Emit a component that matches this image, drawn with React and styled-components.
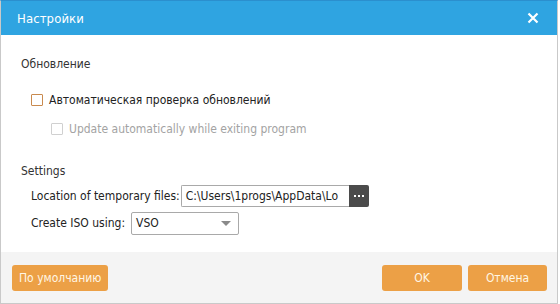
import React, { useState } from 'react'
import styled, { createGlobalStyle } from 'styled-components'

const FONT = `"DejaVu Sans Condensed", "DejaVu Sans", "Liberation Sans", sans-serif`

const GlobalStyle = createGlobalStyle`
	html, body {
		margin: 0;
		padding: 0;
		background: #ffffff;
	}
	body {
		font-family: ${FONT};
	}
`

const Window = styled.div`
	width: 558px;
	height: 304px;
	box-sizing: border-box;
	display: flex;
	flex-direction: column;
	border: 1px solid #c9c9c9;
	border-top-color: #2b8fce;
	background: #ffffff;
	overflow: hidden;
`

const Header = styled.header`
	height: 34px;
	flex: none;
	display: flex;
	align-items: center;
	justify-content: space-between;
	padding: 0 18px 0 16px;
	background: #2fa4e1;
	color: #ffffff;
`

const Title = styled.h1`
	margin: 0;
	font-size: 13px;
	font-weight: normal;
	letter-spacing: 0.1px;
`

const CloseButton = styled.button`
	width: 13px;
	height: 13px;
	padding: 0;
	border: 0;
	background: none;
	display: flex;
	align-items: center;
	justify-content: center;
	cursor: pointer;
`

const Body = styled.main`
	flex: 1;
	display: flex;
	flex-direction: column;
	padding-left: 20px;
	color: #333333;
	font-size: 12px;
`

const SectionTitle = styled.div`
	line-height: 16px;
	margin-top: ${p => p.$top}px;
`

const CheckRow = styled.label`
	display: flex;
	align-items: center;
	gap: 6px;
	line-height: 16px;
	margin-top: ${p => p.$top}px;
	margin-left: ${p => p.$indent}px;
	color: ${p => (p.$disabled ? '#a3a3a3' : '#222222')};
	cursor: ${p => (p.$disabled ? 'default' : 'pointer')};
`

const Box = styled.span`
	width: 10px;
	height: 10px;
	flex: none;
	border: 1px solid ${p => (p.$disabled ? '#d0d0d0' : '#c98a4e')};
	border-radius: 1px;
	background: #ffffff;
	display: flex;
	align-items: center;
	justify-content: center;
	font-size: 9px;
	color: #c98a4e;
`

const FieldRow = styled.div`
	display: flex;
	align-items: center;
	margin-top: ${p => p.$top}px;
	margin-left: 10px;
	height: 22px;
`

const FieldLabel = styled.span`
	color: #222222;
	margin-right: ${p => p.$gap}px;
	white-space: nowrap;
`

const PathBox = styled.div`
	display: flex;
	height: 22px;
	box-sizing: border-box;
	border: 1px solid #a9a9a9;
	border-right: 0;
	border-radius: 2px 0 0 2px;
`

const PathText = styled.div`
	width: 163px;
	padding-left: 4px;
	line-height: 20px;
	white-space: nowrap;
	color: #222222;
	background: #ffffff;
`

const BrowseButton = styled.button`
	width: 20px;
	border: 0;
	padding: 0;
	height: 22px;
	background: #4b4b4b;
	border-radius: 0 2px 2px 0;
	display: flex;
	align-items: center;
	justify-content: center;
	cursor: pointer;
`

const Select = styled.div`
	width: 108px;
	height: 23px;
	box-sizing: border-box;
	border: 1px solid #a9a9a9;
	border-radius: 2px;
	display: flex;
	align-items: center;
	justify-content: space-between;
	padding: 0 7px 0 4px;
	color: #222222;
	background: #ffffff;
`

const Footer = styled.footer`
	height: 51px;
	flex: none;
	box-sizing: border-box;
	display: flex;
	align-items: flex-start;
	padding: 13px 10px 0 11px;
	background: #f4f4f4;
`

const Spacer = styled.div`
	flex: 1;
`

const ActionButton = styled.button`
	height: 26px;
	min-width: ${p => p.$width}px;
	margin-left: ${p => p.$gap || 0}px;
	padding: 0 7px;
	border: 0;
	border-radius: 3px;
	background: #eca046;
	color: #fff6e4;
	font-family: ${FONT};
	font-size: 12px;
	cursor: pointer;
`

const CloseIcon = () => (
	<svg width="12" height="12" viewBox="0 0 12 12">
		<path d="M1.5 1.5 L10.5 10.5 M10.5 1.5 L1.5 10.5" stroke="#ffffff" strokeWidth="2.2" />
	</svg>
)

const Dots = () => (
	<svg width="12" height="4" viewBox="0 0 12 4">
		<rect x="1" y="1" width="2" height="2" fill="#ffffff" />
		<rect x="5" y="1" width="2" height="2" fill="#ffffff" />
		<rect x="9" y="1" width="2" height="2" fill="#ffffff" />
	</svg>
)

const Caret = () => (
	<svg width="10" height="5" viewBox="0 0 10 5">
		<path d="M0 0 H10 L5 5 Z" fill="#8a8a8a" />
	</svg>
)

const App = () => {
	const [ autoCheck, setAutoCheck ] = useState(false)

	return (
		<>
			<GlobalStyle />
			<Window>
				<Header>
					<Title>Настройки</Title>
					<CloseButton aria-label="Закрыть">
						<CloseIcon />
					</CloseButton>
				</Header>
				<Body>
					<SectionTitle $top={21}>Обновление</SectionTitle>
					<CheckRow $top={20} $indent={10} onClick={() => setAutoCheck(!autoCheck)}>
						<Box>{autoCheck && '✓'}</Box>
						Автоматическая проверка обновлений
					</CheckRow>
					<CheckRow $top={13} $indent={30} $disabled>
						<Box $disabled />
						Update automatically while exiting program
					</CheckRow>
					<SectionTitle $top={26}>Settings</SectionTitle>
					<FieldRow $top={6}>
						<FieldLabel $gap={1}>Location of temporary files:</FieldLabel>
						<PathBox>
							<PathText>C:\Users\1progs\AppData\Lo</PathText>
						</PathBox>
						<BrowseButton aria-label="Обзор">
							<Dots />
						</BrowseButton>
					</FieldRow>
					<FieldRow $top={5}>
						<FieldLabel $gap={6}>Create ISO using:</FieldLabel>
						<Select>
							VSO
							<Caret />
						</Select>
					</FieldRow>
				</Body>
				<Footer>
					<ActionButton $width={95}>По умолчанию</ActionButton>
					<Spacer />
					<ActionButton $width={80}>OK</ActionButton>
					<ActionButton $width={79} $gap={6}>Отмена</ActionButton>
				</Footer>
			</Window>
		</>
	)
}

export default App
